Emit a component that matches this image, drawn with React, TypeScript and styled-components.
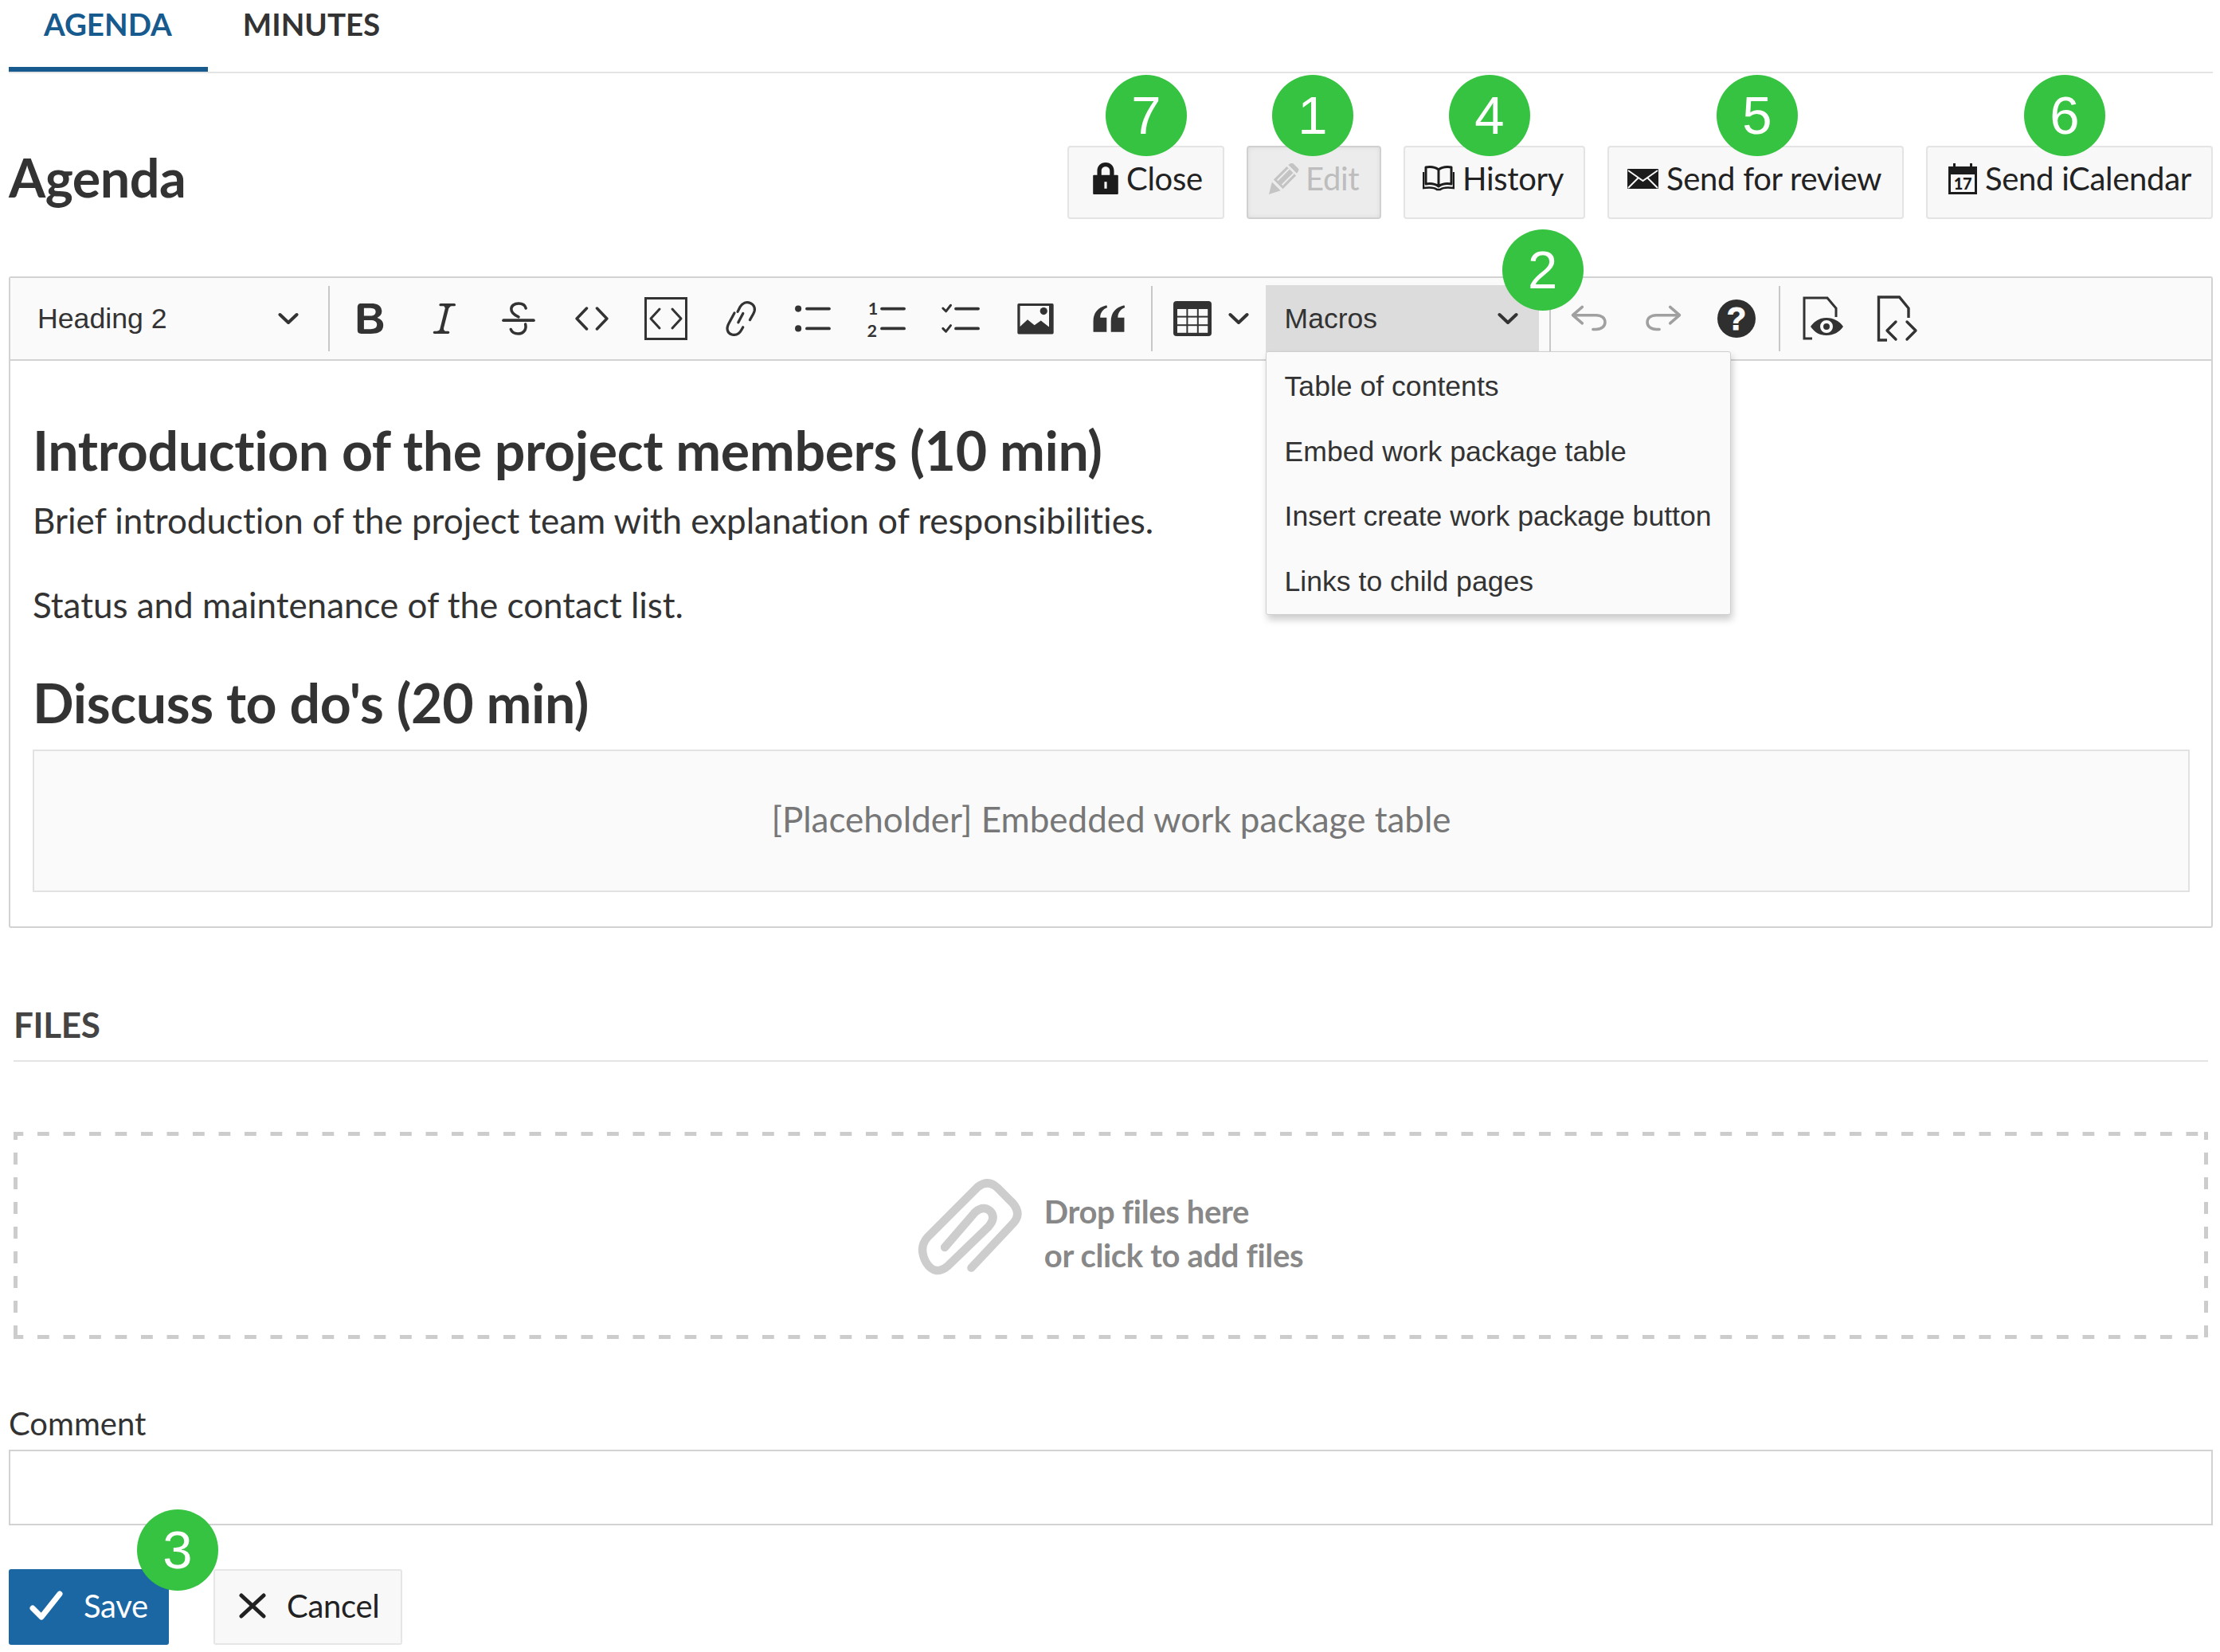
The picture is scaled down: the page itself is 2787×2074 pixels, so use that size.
import React from "react";
import styled, { createGlobalStyle } from "styled-components";

const GlobalStyle = createGlobalStyle`
  html, body {
    margin: 0;
    padding: 0;
    background: #fff;
  }
  body {
    font-family: Lato, "Open Sans", sans-serif;
    color: #333;
  }
  * {
    box-sizing: border-box;
  }
`;

const Page = styled.div`
  width: 2787px;
  height: 2074px;
  padding: 0 9px 0 11px;
  overflow: hidden;
`;

const Tabs = styled.div`
  display: flex;
  height: 92px;
  border-bottom: 2px solid #e4e4e4;
`;

const Tab = styled.div<{ $active?: boolean }>`
  height: 90px;
  padding: 10px 45px 0 44px;
  font-size: 38.5px;
  line-height: 40px;
  font-weight: 700;
  color: ${(p) => (p.$active ? "#175a8e" : "#333")};
  border-bottom: 6px solid ${(p) => (p.$active ? "#175a8e" : "transparent")};
`;

const HeaderRow = styled.div`
  display: flex;
  align-items: center;
  justify-content: space-between;
  margin-top: 91px;
  height: 92px;
`;

const Title = styled.h2`
  margin: 0;
  padding-bottom: 14px;
  font-size: 66.5px;
  font-weight: 700;
  letter-spacing: -0.5px;
  color: #333;
`;

const Actions = styled.div`
  display: flex;
  gap: 28px;
`;

const ActionButton = styled.div<{ $disabled?: boolean; $width: number; $left: number }>`
  position: relative;
  display: flex;
  align-items: center;
  gap: 10px;
  width: ${(p) => p.$width}px;
  height: 92px;
  padding: 0 0 10px ${(p) => p.$left}px;
  border: 2px solid ${(p) => (p.$disabled ? "#d0d0d0" : "#e4e4e4")};
  border-radius: 4px;
  background: ${(p) => (p.$disabled ? "#ececec" : "#f8f8f8")};
  box-shadow: ${(p) => (p.$disabled ? "inset 0 0 6px rgba(0, 0, 0, 0.07)" : "none")};
  font-size: 40px;
  letter-spacing: -0.3px;
  color: #222;
`;

const Dimmed = styled.span`
  display: flex;
  align-items: center;
  gap: 8px;
  color: #bdbdbd;
`;

const Badge = styled.span<{ $left: number; $top: number }>`
  position: absolute;
  z-index: 5;
  left: ${(p) => p.$left}px;
  top: ${(p) => p.$top}px;
  width: 102px;
  height: 102px;
  border-radius: 50%;
  background: #36c341;
  color: #fff;
  font-family: "Liberation Sans", Arial, sans-serif;
  font-size: 67px;
  line-height: 102px;
  text-align: center;
  letter-spacing: 0;
`;

const Editor = styled.div`
  margin-top: 72px;
  height: 818px;
  border: 2px solid #d2d2d2;
  border-radius: 3px;
`;

const Toolbar = styled.div`
  display: flex;
  align-items: center;
  height: 104px;
  background: #fafafa;
  border-bottom: 2px solid #d2d2d2;
`;

const HeadingSelect = styled.div`
  display: flex;
  align-items: center;
  justify-content: space-between;
  width: 394px;
  padding: 0 32px 0 34px;
  font-family: "Liberation Sans", Arial, sans-serif;
  font-size: 35.7px;
  color: #333;
`;

const Separator = styled.span<{ $before: number; $after: number }>`
  flex: none;
  width: 2px;
  height: 82px;
  margin: 0 ${(p) => p.$after}px 0 ${(p) => p.$before}px;
  background: #c8c8c8;
`;

const ToolCell = styled.span`
  flex: none;
  display: flex;
  align-items: center;
  justify-content: center;
  width: 92.7px;
  color: #333;
`;

const TableCell = styled.span`
  flex: none;
  display: flex;
  align-items: center;
  gap: 21px;
  width: 136px;
  padding-left: 20px;
  color: #333;
`;

const MacrosWrap = styled.div`
  position: relative;
  flex: none;
  width: 343px;
  height: 84px;
`;

const MacrosSelect = styled.div`
  display: flex;
  align-items: center;
  justify-content: space-between;
  height: 84px;
  padding: 0 26px 0 24px;
  background: #dcdcdc;
  font-family: "Liberation Sans", Arial, sans-serif;
  font-size: 35.5px;
  color: #333;
`;

const MacrosMenu = styled.div`
  position: absolute;
  z-index: 3;
  left: 0;
  top: 83px;
  width: 584px;
  height: 331px;
  padding-top: 3px;
  background: #fafafa;
  border: 1px solid #cfcfcf;
  border-radius: 3px;
  box-shadow: 2px 6px 10px rgba(0, 0, 0, 0.2);
`;

const MenuItem = styled.div`
  height: 81.5px;
  line-height: 81.5px;
  padding-left: 23px;
  font-family: "Liberation Sans", Arial, sans-serif;
  font-size: 35.6px;
  color: #333;
  white-space: nowrap;
`;

const Content = styled.div`
  padding: 0 27px 0 28px;
`;

const Heading = styled.h2<{ $top: number }>`
  margin: ${(p) => p.$top}px 0 0;
  font-size: 68px;
  line-height: 84px;
  font-weight: 700;
  letter-spacing: -0.35px;
  color: #333;
`;

const Paragraph = styled.p<{ $top: number }>`
  margin: ${(p) => p.$top}px 0 0;
  font-size: 44px;
  line-height: 56px;
  letter-spacing: -0.02px;
  color: #333;
`;

const Placeholder = styled.div`
  display: flex;
  align-items: center;
  justify-content: center;
  height: 179px;
  margin-top: 17px;
  padding-bottom: 6px;
  background: #fafafa;
  border: 2px solid #e2e2e2;
  font-size: 44px;
  color: #777;
`;

const FilesTitle = styled.div`
  display: flex;
  align-items: center;
  height: 70px;
  margin: 96px 6px 0 6px;
  padding-bottom: 21px;
  font-size: 44px;
  font-weight: 700;
  letter-spacing: -0.35px;
  color: #444;
`;

const FilesRule = styled.div`
  height: 2px;
  margin: 0 6px;
  background: #e4e4e4;
`;

const DropZone = styled.div`
  display: flex;
  align-items: center;
  justify-content: center;
  height: 260px;
  margin: 88px 6px 0;
  padding-right: 22px;
  background:
    linear-gradient(90deg, #ccc 15px, transparent 15px) 30px 0 / 32.5px 5px repeat-x,
    linear-gradient(90deg, #ccc 15px, transparent 15px) 30px 100% / 32.5px 5px repeat-x,
    linear-gradient(180deg, #ccc 15px, transparent 15px) 0 26px / 5px 31px repeat-y,
    linear-gradient(180deg, #ccc 15px, transparent 15px) 100% 26px / 5px 31px repeat-y;
`;

const ClipWrap = styled.span`
  display: flex;
  margin-bottom: 22px;
`;

const DropText = styled.div`
  padding-bottom: 4px;
  font-size: 40px;
  line-height: 55px;
  font-weight: 700;
  letter-spacing: -0.35px;
  color: #888;
`;

const CommentLabel = styled.div`
  margin-top: 82px;
  height: 48px;
  font-size: 40px;
  line-height: 48px;
  color: #333;
`;

const CommentInput = styled.div`
  height: 95px;
  margin-top: 9px;
  border: 2px solid #d2d2d2;
`;

const FormButtons = styled.div`
  display: flex;
  gap: 56px;
  margin-top: 55px;
`;

const SaveButton = styled.div`
  position: relative;
  display: flex;
  align-items: center;
  gap: 26px;
  width: 201px;
  height: 95px;
  padding: 0 0 4px 26px;
  background: #1a67a3;
  border-radius: 3px;
  font-size: 40px;
  letter-spacing: -0.3px;
  color: #fff;
`;

const CancelButton = styled.div`
  display: flex;
  align-items: center;
  gap: 26px;
  width: 237px;
  height: 95px;
  padding: 0 0 4px 30px;
  background: #f8f8f8;
  border: 2px solid #e6e6e6;
  border-radius: 3px;
  font-size: 40px;
  letter-spacing: -0.3px;
  color: #222;
`;

const Chevron = () => (
  <svg width="26" height="16" viewBox="0 0 26 16" fill="none" stroke="#333" strokeWidth="4" strokeLinecap="round" strokeLinejoin="round">
    <path d="M2.5 3 13 13 23.5 3" />
  </svg>
);

const Icon = ({ size = 54, children }: { size?: number; children: React.ReactNode }) => (
  <svg width={size} height={size} viewBox="0 0 20 20" fill="currentColor">
    {children}
  </svg>
);

const Line = (props: { d: string; w?: number }) => (
  <path d={props.d} fill="none" stroke="currentColor" strokeWidth={props.w ?? 1.3} strokeLinecap="round" strokeLinejoin="round" />
);

const toolIcons: React.ReactNode[] = [
  <Icon key="bold">
    <path d="M10.187 17H5.773c-.637 0-1.092-.138-1.364-.415-.273-.277-.409-.718-.409-1.323V4.738c0-.617.14-1.062.419-1.332.279-.27.73-.406 1.354-.406h4.68c.69 0 1.288.041 1.793.124.506.083.96.242 1.36.478.341.197.644.447.906.75a3.262 3.262 0 0 1 .808 2.162c0 1.401-.722 2.426-2.167 3.075C15.05 10.175 16 11.315 16 13.01a3.756 3.756 0 0 1-2.296 3.504 6.1 6.1 0 0 1-1.517.377c-.571.073-1.238.11-2 .11zm-.217-6.217H7v4.087h3.069c1.977 0 2.965-.69 2.965-2.072 0-.707-.256-1.22-.768-1.537-.512-.319-1.277-.478-2.296-.478zM7 5.13v3.619h2.606c.729 0 1.292-.067 1.69-.2a1.6 1.6 0 0 0 .91-.765c.165-.267.247-.566.247-.897 0-.707-.26-1.176-.778-1.409-.519-.232-1.31-.348-2.375-.348H7z" />
  </Icon>,
  <Icon key="italic">
    <path d="m9.586 14.633.021.004c-.036.335.095.655.393.962.082.083.173.15.274.201h1.474a.6.6 0 1 1 0 1.2H5.304a.6.6 0 0 1 0-1.2h1.15c.474-.07.809-.182 1.005-.334.157-.122.291-.32.404-.597l2.416-9.55a1.053 1.053 0 0 0-.281-.823 1.12 1.12 0 0 0-.442-.296H8.15a.6.6 0 0 1 0-1.2h6.443a.6.6 0 1 1 0 1.2h-1.195c-.376.056-.65.155-.823.296-.215.175-.423.439-.623.79l-2.366 9.347z" />
  </Icon>,
  <Icon key="strike">
    <Line d="M13.4 5.2C13 3.6 11.8 3 10 3 8 3 6.6 4 6.6 5.6 6.6 7.4 8 8.4 10 9.2" w={1.3} />
    <Line d="M3 10.8h14" w={1.4} />
    <Line d="M13.2 12.6c.6 2.6-1 4.4-3.2 4.4-2 0-3.2-.8-3.6-2" w={1.3} />
  </Icon>,
  <Icon key="code">
    <Line d="M7.6 5.2 3 10l4.6 4.8M12.4 5.2 17 10l-4.6 4.8" w={1.3} />
  </Icon>,
  <svg key="block" width="54" height="54" viewBox="0 0 54 54" fill="none" stroke="currentColor" strokeWidth="3">
    <rect x="1.5" y="1.5" width="51" height="51" />
    <path d="M19 15 8 27l11 12M35 15l11 12-11 12" strokeWidth="3" strokeLinecap="round" strokeLinejoin="round" />
  </svg>,
  <Icon key="link">
    <Line d="M7.4 7.4 4.8 12.2c-1.4 2.6-.6 4.6 1.4 5.2 1.8.5 3.4-.2 4.4-2l.8-1.4" w={1.2} />
    <Line d="M8.9 6.8 10 4.6c1.2-1.8 3-2.6 4.8-1.8 2 .9 2.6 2.8 1.4 5l-1.6 2.8" w={1.2} />
    <Line d="M11.4 7.6 9.2 11.8" w={1.2} />
  </Icon>,
  <Icon key="bullets">
    <circle cx="3" cy="5.4" r="1.5" />
    <circle cx="3" cy="14.6" r="1.5" />
    <Line d="M7 5.4h10.4M7 14.6h10.4" w={1.4} />
  </Icon>,
  <Icon key="numbered">
    <text x="1" y="8" fontFamily="Lato, sans-serif" fontSize="8" fontWeight="700">1</text>
    <text x="0.6" y="18.4" fontFamily="Lato, sans-serif" fontSize="8" fontWeight="700">2</text>
    <Line d="M7.4 5.4h10.4M7.4 14.6h10.4" w={1.4} />
  </Icon>,
  <Icon key="todo">
    <Line d="M1.4 5.2 2.8 6.6l2.2-2.8M1.4 14.6l1.4 1.4 2.2-2.8" w={1.1} />
    <Line d="M7.4 5.4h10.4M7.4 14.6h10.4" w={1.4} />
  </Icon>,
  <Icon key="image">
    <path fillRule="evenodd" d="M1.6 3.6a.6.6 0 0 1 .6-.6h15.6a.6.6 0 0 1 .6.6v13a.6.6 0 0 1-.6.6H2.2a.6.6 0 0 1-.6-.6v-13zm1.2.5v9.6l3.5-3.2 3.2 2.6 3-2.2 3.8 3V4.100H2.800z" />
    <circle cx="13.800" cy="6.500" r="1.700" />
  </Icon>,
  <Icon key="quote">
    <path d="M2.800 16.200V11.200C2.800 7.400 4.800 4.800 9 3.800l.3 1C7.200 5.600 6 7.300 6 9.500h3v6.700H2.800zM11 16.200V11.200C11 7.400 13 4.800 17.200 3.800l.3 1c-2.100.8-3.300 2.500-3.300 4.700h3v6.700H11z" />
  </Icon>,
];

const UndoIcon = () => (
  <svg width="54" height="54" viewBox="0 0 20 20" fill="none" stroke="#a0a0a0" strokeWidth="1.3" strokeLinecap="round" strokeLinejoin="round">
    <path d="M6.800 4.600 2.400 8.400l4.400 3.800M2.600 8.400h10.600c2.600 0 4.200 1.400 4.200 3.300 0 1.900-1.600 3.300-4.200 3.300h-1.400" />
  </svg>
);

const RedoIcon = () => (
  <svg width="54" height="54" viewBox="0 0 20 20" fill="none" stroke="#a0a0a0" strokeWidth="1.3" strokeLinecap="round" strokeLinejoin="round">
    <path d="m13.200 4.600 4.400 3.800-4.400 3.800M17.400 8.400H6.800c-2.600 0-4.200 1.400-4.200 3.300 0 1.900 1.600 3.300 4.200 3.300h1.400" />
  </svg>
);

const HelpIcon = () => (
  <svg width="50" height="50" viewBox="0 0 50 50">
    <circle cx="25" cy="25" r="24" fill="#2f2f2f" />
    <text x="25" y="39" textAnchor="middle" fontFamily="'Liberation Sans', sans-serif" fontSize="40" fontWeight="700" fill="#fafafa" stroke="#fafafa" strokeWidth="1">?</text>
  </svg>
);

const PreviewIcon = () => (
  <svg width="54" height="56" viewBox="0 0 54 56" fill="none" stroke="#333" strokeWidth="3">
    <path d="M13 53H3V2h29l11 13v11" />
    <path fill="#333" stroke="none" fillRule="evenodd" d="M11 38c5-7 11-11 20-11s16 4 21 11c-5 7-12 11-21 11s-15-4-20-11zm20-8a8 8 0 1 0 0 16 8 8 0 0 0 0-16zm0 4a4 4 0 1 1 0 8 4 4 0 0 1 0-8z" />
  </svg>
);

const SourceIcon = () => (
  <svg width="54" height="58" viewBox="0 0 54 58" fill="none" stroke="#333" strokeWidth="3">
    <path d="M14 56H3.500V2h26L41 16v12" strokeWidth="3.400" />
    <path d="M25 33 14 44l11 11M39 33l11 11-11 11" strokeWidth="3.400" strokeLinecap="round" strokeLinejoin="round" />
  </svg>
);

const TableIcon = () => (
  <svg width="48" height="44" viewBox="0 0 48 44">
    <rect width="48" height="44" rx="4" fill="#333" />
    {[0, 1, 2].map((row) =>
      [0, 1, 2].map((col) => (
        <rect key={`${row}-${col}`} x={5 + col * 13.4} y={10 + row * 10.6} width="11.4" height="8.6" fill="#fafafa" />
      ))
    )}
  </svg>
);

const LockIcon = () => (
  <svg width="32" height="40" viewBox="0 0 30 38">
    <path fill="#1c1c1c" fillRule="evenodd" d="M5 15V10C5 4 9 0 15 0s10 4 10 10v5h4a1 1 0 0 1 1 1v21a1 1 0 0 1-1 1H1a1 1 0 0 1-1-1V16a1 1 0 0 1 1-1h4zm5 0h10V10c0-3-2-5-5-5s-5 2-5 5v5zm3.500 8v8h3v-8h-3z" />
  </svg>
);

const PencilIcon = () => (
  <svg width="39" height="39" viewBox="0 0 40 40">
    <path fill="#c4c4c4" d="M7 21 24 4l12 12-17 17L7 21zM5 24l11 11L1 40l4-16zM26 2l3-2c1-.500 2-.500 3 0l7 7c.500 1 .500 2 0 3l-2 3L26 2z" />
    <path stroke="#ececec" strokeWidth="2" fill="none" d="M12 22 27 7M18 28 33 13" />
  </svg>
);

const BookIcon = () => (
  <svg width="40" height="32" viewBox="0 0 40 32" fill="none" stroke="#1c1c1c" strokeWidth="3">
    <path d="M20 5C16 2 10 1 4 2v21c6-1 12 0 16 3 4-3 10-4 16-3V2c-6-1-12 0-16 3zM20 5v21" strokeLinejoin="round" />
    <path d="M1 8v20c7-1 14-.500 17 2h4c3-2.500 10-3 17-2V8" strokeWidth="2.500" />
  </svg>
);

const MailIcon = () => (
  <svg width="39" height="25" viewBox="0 0 39 25">
    <rect width="39" height="25" rx="1" fill="#1c1c1c" />
    <path d="M1 2l18.500 13L38 2M1 24l13-13M38 24 25 11" fill="none" stroke="#f8f8f8" strokeWidth="2" />
  </svg>
);

const CalendarIcon = () => (
  <svg width="36" height="39" viewBox="0 0 36 39">
    <path fill="#1c1c1c" fillRule="evenodd" d="M0 4h6V0h3v4h18V0h3v4h6v35H0V4zm3 10v22h30V14H3z" />
    <text x="18" y="33" textAnchor="middle" fontFamily="Lato, sans-serif" fontWeight="900" fontSize="20" fill="#1c1c1c">17</text>
  </svg>
);

const CheckIcon = () => (
  <svg width="42" height="38" viewBox="0 0 42 38" fill="none" stroke="#fff" strokeWidth="7" strokeLinecap="round" strokeLinejoin="round">
    <path d="M4 22 15 33 38 4" />
  </svg>
);

const CrossIcon = () => (
  <svg width="34" height="32" viewBox="0 0 34 32" fill="none" stroke="#222" strokeWidth="5" strokeLinecap="round">
    <path d="M3 3l28 26M31 3 3 29" />
  </svg>
);

const ClipIcon = () => (
  <svg width="180" height="160" viewBox="0 0 540 480" fill="none" stroke="#cdcdcd" strokeWidth="31" strokeLinecap="round" strokeLinejoin="round">
    <path d="M265 395 425 225Q455 190 420 150L365 95Q330 60 290 90L100 280Q65 320 95 375 130 430 180 385L330 240Q360 205 335 180 310 160 280 185L165 318" />
  </svg>
);

const macroItems = [
  "Table of contents",
  "Embed work package table",
  "Insert create work package button",
  "Links to child pages",
];

export default function App() {
  return (
    <Page>
      <GlobalStyle />
      <Tabs>
        <Tab $active>AGENDA</Tab>
        <Tab>MINUTES</Tab>
      </Tabs>

      <HeaderRow>
        <Title>Agenda</Title>
        <Actions>
          <ActionButton $width={197} $left={30}>
            <Badge $left={46} $top={-91}>7</Badge>
            <LockIcon />
            <span>Close</span>
          </ActionButton>
          <ActionButton $disabled $width={169} $left={25}>
            <Badge $left={30} $top={-91}>1</Badge>
            <Dimmed>
              <PencilIcon />
              <span>Edit</span>
            </Dimmed>
          </ActionButton>
          <ActionButton $width={228} $left={22}>
            <Badge $left={55} $top={-91}>4</Badge>
            <BookIcon />
            <span>History</span>
          </ActionButton>
          <ActionButton $width={372} $left={23}>
            <Badge $left={135} $top={-91}>5</Badge>
            <MailIcon />
            <span>Send for review</span>
          </ActionButton>
          <ActionButton $width={360} $left={26}>
            <Badge $left={121} $top={-91}>6</Badge>
            <CalendarIcon />
            <span>Send iCalendar</span>
          </ActionButton>
        </Actions>
      </HeaderRow>

      <Editor>
        <Toolbar>
          <HeadingSelect>
            <span>Heading 2</span>
            <Chevron />
          </HeadingSelect>
          <Separator $before={5} $after={5} />
          {toolIcons.map((icon, i) => (
            <ToolCell key={i}>{icon}</ToolCell>
          ))}
          <Separator $before={6} $after={6} />
          <TableCell>
            <TableIcon />
            <Chevron />
          </TableCell>
          <MacrosWrap>
            <MacrosSelect>
              <span>Macros</span>
              <Chevron />
            </MacrosSelect>
            <Badge $left={297} $top={-70}>2</Badge>
            <MacrosMenu>
              {macroItems.map((item) => (
                <MenuItem key={item}>{item}</MenuItem>
              ))}
            </MacrosMenu>
          </MacrosWrap>
          <Separator $before={13} $after={2} />
          <ToolCell><UndoIcon /></ToolCell>
          <ToolCell><RedoIcon /></ToolCell>
          <ToolCell><HelpIcon /></ToolCell>
          <Separator $before={6} $after={8} />
          <ToolCell><PreviewIcon /></ToolCell>
          <ToolCell><SourceIcon /></ToolCell>
        </Toolbar>
        <Content>
          <Heading $top={70}>Introduction of the project members (10 min)</Heading>
          <Paragraph $top={18}>Brief introduction of the project team with explanation of responsibilities.</Paragraph>
          <Paragraph $top={50}>Status and maintenance of the contact list.</Paragraph>
          <Heading $top={53}>Discuss to do's (20 min)</Heading>
          <Placeholder>[Placeholder] Embedded work package table</Placeholder>
        </Content>
      </Editor>

      <FilesTitle>FILES</FilesTitle>
      <FilesRule />
      <DropZone>
        <ClipWrap>
          <ClipIcon />
        </ClipWrap>
        <DropText>
          Drop files here
          <br />
          or click to add files
        </DropText>
      </DropZone>

      <CommentLabel>Comment</CommentLabel>
      <CommentInput />
      <FormButtons>
        <SaveButton>
          <CheckIcon />
          <span>Save</span>
          <Badge $left={161} $top={-75}>3</Badge>
        </SaveButton>
        <CancelButton>
          <CrossIcon />
          <span>Cancel</span>
        </CancelButton>
      </FormButtons>
    </Page>
  );
}
